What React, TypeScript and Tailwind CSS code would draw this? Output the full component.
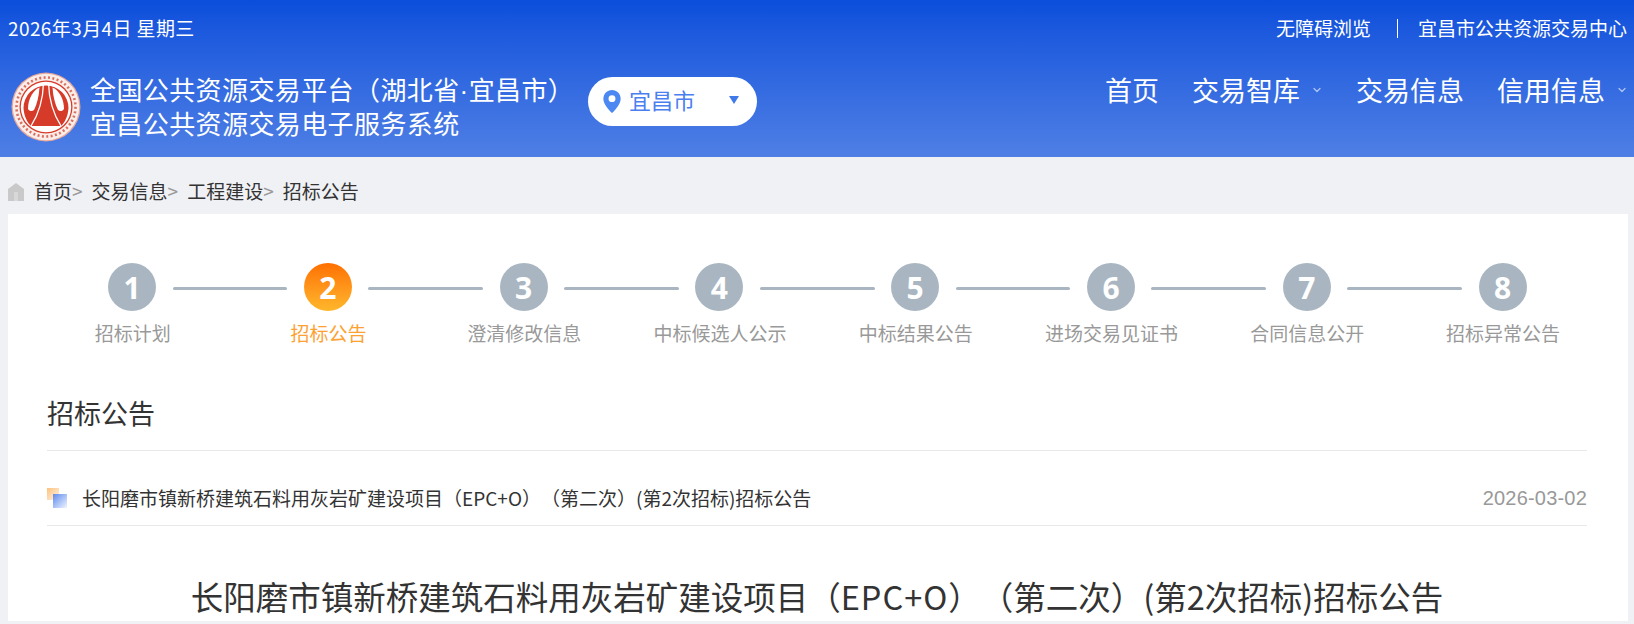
import { ChevronDown } from 'lucide-react';

const font = { fontFamily: '"Noto Sans CJK SC", "Noto Sans", sans-serif' };

const steps = [
  { num: '1', label: '招标计划' },
  { num: '2', label: '招标公告', active: true },
  { num: '3', label: '澄清修改信息' },
  { num: '4', label: '中标候选人公示' },
  { num: '5', label: '中标结果公告' },
  { num: '6', label: '进场交易见证书' },
  { num: '7', label: '合同信息公开' },
  { num: '8', label: '招标异常公告' },
];

const crumbs = ['首页', '交易信息', '工程建设'];

function Logo() {
  return (
    <svg width="70" height="70" viewBox="0 0 70 70" className="shrink-0">
      <circle cx="35" cy="35" r="34.5" fill="#e7a79b" />
      <circle cx="35" cy="35" r="33.2" fill="#fbeeea" />
      <circle cx="35" cy="35" r="29.5" fill="none" stroke="#d9705f" strokeWidth="2.6" strokeDasharray="2 2.4" />
      <circle cx="35" cy="35" r="26.5" fill="#d63a28" />
      <circle cx="35" cy="35" r="25.2" fill="#fff" />
      <path d="M12.5 36 A22.5 22.5 0 0 1 57.5 36 C57 44 54 50 50 54 H20 C16 50 13 44 12.5 36 Z" fill="#d63a28" />
      <path d="M26.5 16.5 C21 20 17 28 17 37 C18 39 21 40 23 38 C26 32 28 24 28.5 15.5 Z" fill="#fff" />
      <path d="M43.5 16.5 C49 20 53 28 53 37 C52 39 49 40 47 38 C44 32 42 24 41.5 15.5 Z" fill="#fff" />
      <path d="M32.5 11 C32 30 27 43 20 54 M37.5 11 C38 30 43 43 50 54" stroke="#fff" strokeWidth="1.3" fill="none" />
    </svg>
  );
}

function Pin() {
  return (
    <svg width="18" height="23" viewBox="0 0 18 24" className="shrink-0">
      <path d="M9 0C4 0 0 4 0 9c0 6 6 12 9 15 3-3 9-9 9-15 0-5-4-9-9-9z" fill="#4b88f2" />
      <circle cx="9" cy="9" r="3.6" fill="#fff" />
    </svg>
  );
}

function HomeIcon() {
  return (
    <svg width="16" height="18" viewBox="0 0 16 18" className="shrink-0">
      <path d="M8 0 L16 6 V18 H0 V6 Z" fill="#c9c9c9" />
      <rect x="6" y="9" width="4" height="9" fill="#d8d8d8" />
    </svg>
  );
}

function ListMark() {
  return (
    <span className="relative block h-5 w-5 shrink-0">
      <span className="absolute left-0 top-0 h-3 w-3 bg-gradient-to-br from-[#fcc27c] to-[#fff3e4]" />
      <span className="absolute bottom-0 right-0 h-[14px] w-[14px] bg-gradient-to-br from-[#5f88ea] to-[#f1f5fe]" />
    </span>
  );
}

export default function App() {
  return (
    <div className="h-[624px] overflow-hidden bg-[#f0f1f5] [text-spacing-trim:space-all]" style={font}>
      {/* header */}
      <header className="h-[157px] bg-gradient-to-b from-[#0a4edb] to-[#4f7fe5] text-white">
        <div className="flex h-[57px] items-center justify-between pl-2 pr-[7px] text-[19px]">
          <span className="tracking-[0.4px]">2026年3月4日 星期三</span>
          <div className="flex items-center">
            <span>无障碍浏览</span>
            <span className="ml-[26px] mr-[20px] h-[19px] w-px bg-white" />
            <span>宜昌市公共资源交易中心</span>
          </div>
        </div>
        <div className="flex h-[100px] items-start justify-between pl-[11px] pr-[6px]">
          <div className="mt-[15px] flex items-center">
            <Logo />
            <div className="mb-[2px] ml-[9px] w-[474px] whitespace-nowrap text-[26px] leading-[32px] tracking-[0.4px]">
              <div>
                全国公共资源交易平台（湖北省<span className="font-['Liberation_Sans']">·</span>宜昌市）
              </div>
              <div>宜昌公共资源交易电子服务系统</div>
            </div>
            <div className="mb-[12px] ml-[24px] flex h-[49px] w-[169px] items-center rounded-full bg-white pl-[15px] text-[#4b7ff0]">
              <Pin />
              <span className="mb-[3px] ml-[8px] text-[22px]">宜昌市</span>
              <span className="mb-[2px] ml-[34px] h-0 w-0 border-x-[5.5px] border-t-[8px] border-x-transparent border-t-[#3f79ea]" />
            </div>
          </div>
          <nav className="mt-[13px] flex items-center text-[27px] leading-[40px]">
            <span>首页</span>
            <span className="ml-[33px]">交易智库</span>
            <ChevronDown className="ml-[11px] mr-[33px] h-[12px] w-[12px] text-white/60" strokeWidth={2.5} />
            <span>交易信息</span>
            <span className="ml-[33px]">信用信息</span>
            <ChevronDown className="ml-[11px] h-[12px] w-[12px] text-white/60" strokeWidth={2.5} />
          </nav>
        </div>
      </header>

      {/* breadcrumb */}
      <div className="flex h-[57px] items-center pl-2 pt-[12px] text-[19px] text-[#333]">
        <HomeIcon />
        <span className="ml-[10px]">{crumbs[0]}</span>
        <span className="mr-[9px] text-[#999]">&gt;</span>
        <span>{crumbs[1]}</span>
        <span className="mr-[9px] text-[#999]">&gt;</span>
        <span>{crumbs[2]}</span>
        <span className="mr-[9px] text-[#999]">&gt;</span>
        <span>招标公告</span>
      </div>

      {/* card */}
      <main className="ml-2 mr-[6px] bg-white pl-[39px] pr-[41px] pt-[49px]">
        <div className="-ml-[13px] -mr-[14px]">
          <div className="flex items-center pl-[74px]">
            {steps.map((s, i) => (
              <div key={s.num} className="flex items-center">
                <div
                  className={`flex h-12 w-12 items-center justify-center rounded-full text-[30px] font-bold text-white ${
                    s.active ? 'bg-gradient-to-b from-[#ff6f00] to-[#ffb72b]' : 'bg-[#a9b6c1]'
                  }`}
                  style={{ fontFamily: '"Open Sans", sans-serif' }}
                >
                  {s.num}
                </div>
                {i < steps.length - 1 && <div className="mx-[16.5px] mt-[2px] h-[3px] w-[114.8px] rounded-full bg-[#a9b6c1]" />}
              </div>
            ))}
          </div>
          <div className="mt-[8px] grid grid-cols-8 pl-px text-center text-[19px] leading-[28px]">
            {steps.map((s) => (
              <span key={s.num} className={s.active ? 'text-[#fda232]' : 'text-[#999]'}>
                {s.label}
              </span>
            ))}
          </div>
        </div>

        <h2 className="mt-[42px] border-b border-[#e8e8e8] pb-[13px] text-[27px] font-normal leading-[48px] text-[#333]">招标公告</h2>

        <div className="flex h-[75px] items-center justify-between border-b border-[#e8e8e8] pt-[20px] text-[19px]">
          <div className="flex items-center text-[#333]">
            <ListMark />
            <span className="ml-[15px]">长阳磨市镇新桥建筑石料用灰岩矿建设项目（EPC+O）（第二次）(第2次招标)招标公告</span>
          </div>
          <span className="font-['Liberation_Sans'] text-[20px] tracking-[0.2px] text-[#999]">2026-03-02</span>
        </div>

        <h1 className="mt-[45px] text-center text-[32.5px] font-normal leading-[50px] text-[#333]">
          长阳磨市镇新桥建筑石料用灰岩矿建设项目（<span className="tracking-[1px]">EPC+O</span>）（第二次）(第2次招标)招标公告
        </h1>
      </main>
    </div>
  );
}
